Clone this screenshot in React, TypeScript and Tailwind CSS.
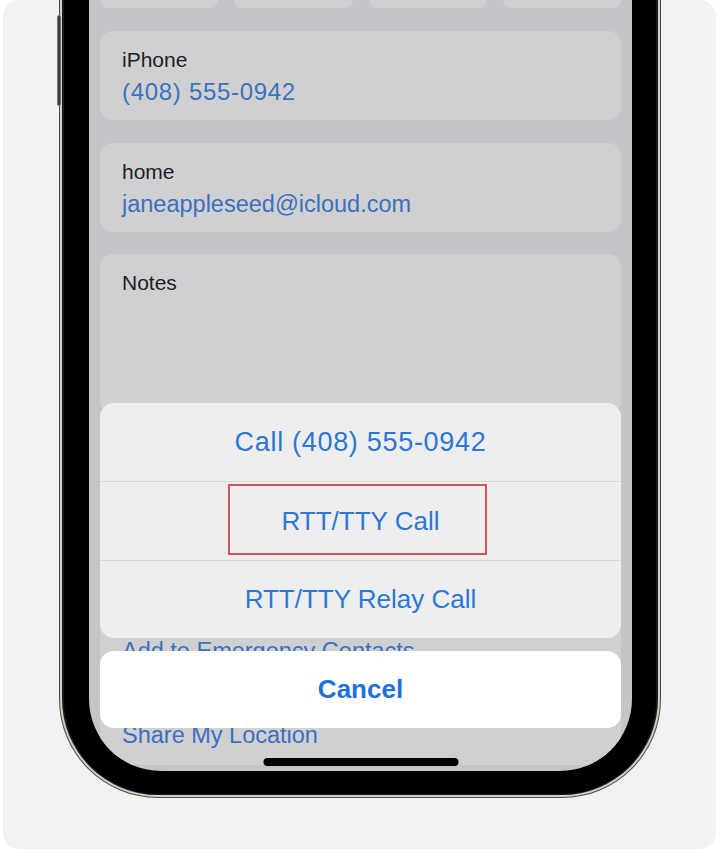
const font = { fontFamily: '"Liberation Sans", Arial, sans-serif' }

function FieldCard({ label, value, wide }: { label: string; value: string; wide?: boolean }) {
  return (
    <div className="h-[89px] rounded-[13px] bg-[#d0d0d3] pl-[22px] pt-[16px]">
      <p className="text-[21px] leading-[26px] text-[#1d1d1f]">{label}</p>
      <p className={wide ? "mt-[4px] text-[24px] leading-[30px] tracking-[0.7px] text-[#3a70bd]" : "mt-[4px] text-[23.5px] leading-[30px] text-[#3a70bd]"}>
        {value}
      </p>
    </div>
  )
}

function SheetRow({ children }: { children: React.ReactNode }) {
  return (
    <div className="relative flex h-[78px] items-center justify-center text-[26px] text-[#2b77d3]">
      {children}
    </div>
  )
}

function App() {
  return (
    <div className="h-[857px] w-[720px] overflow-hidden bg-white pl-[3px] pt-[4px]" style={font}>
      <div className="h-[849px] w-[713px] rounded-[16px] bg-[#f2f2f2] pl-[56px]">

        {/* phone body */}
        <div className="relative -mt-[4px] h-[798px] w-[602px]">
          {/* side button */}
          <div className="absolute -left-[2px] top-[15px] h-[91px] w-[4px] rounded-[2px] border border-[#777] bg-[#3c3a38]" />

          <div className="h-full rounded-b-[99px] bg-[#4d4b48] px-[1px] pb-[1px]">
            <div className="h-full rounded-b-[98px] bg-[#d3cec6] px-[2px] pb-[2px]">
              <div className="h-full rounded-b-[96px] bg-[#1c1b1a] px-[2px] pb-[1px]">
                <div className="h-full rounded-b-[94px] bg-black pb-[23px] pl-[25px] pr-[24px]">

                  {/* screen */}
                  <div className="relative h-full overflow-hidden rounded-b-[72px] bg-[#c5c5c9] px-[11px]">

                    <div className="flex gap-[16px]">
                      <div className="h-[8px] flex-1 rounded-b-[10px] bg-[#d0d0d3]" />
                      <div className="h-[8px] flex-1 rounded-b-[10px] bg-[#d0d0d3]" />
                      <div className="h-[8px] flex-1 rounded-b-[10px] bg-[#d0d0d3]" />
                      <div className="h-[8px] flex-1 rounded-b-[10px] bg-[#d0d0d3]" />
                    </div>

                    <div className="mt-[23px]">
                      <FieldCard label="iPhone" value="(408) 555-0942" wide />
                    </div>
                    <div className="mt-[23px]">
                      <FieldCard label="home" value="janeappleseed@icloud.com" />
                    </div>

                    <div className="mt-[22px] h-[160px] rounded-[13px] bg-[#d0d0d3] pl-[22px] pt-[16px]">
                      <p className="text-[21px] leading-[26px] text-[#1d1d1f]">Notes</p>
                    </div>

                    {/* contact actions, mostly under the sheet */}
                    <div className="mt-[22px] rounded-[13px] bg-[#d0d0d3] pl-[22px] pt-[185px] text-[23.5px] text-[#3a70bd]">
                      <p className="leading-[60px]">Add to Emergency Contacts</p>
                    </div>

                    <div className="mt-[24px] rounded-[13px] bg-[#d0d0d3] pl-[22px] text-[23.5px] text-[#3a70bd]">
                      <p className="leading-[60px]">Share My Location</p>
                    </div>

                    {/* action sheet */}
                    <div className="absolute inset-x-[11px] bottom-[43px] flex flex-col gap-[13px]">
                      <div className="overflow-hidden rounded-[14px] bg-[#eeeef0]">
                        <SheetRow>
                          <span className="text-[27px] tracking-[0.7px]">Call (408) 555-0942</span>
                        </SheetRow>
                        <div className="h-px bg-[#d6d6d9]" />
                        <SheetRow>
                          RTT/TTY Call
                          <div className="absolute left-[128px] top-[2px] h-[71px] w-[259px] border-2 border-[#d6505a]" />
                        </SheetRow>
                        <div className="h-px bg-[#d6d6d9]" />
                        <div className="flex h-[77px] items-center justify-center text-[26px] text-[#2b77d3]">
                          RTT/TTY Relay Call
                        </div>
                      </div>
                      <div className="flex h-[77px] items-center justify-center rounded-[14px] bg-white text-[26px] font-bold text-[#1f6fdc]">
                        Cancel
                      </div>
                    </div>

                    {/* home indicator */}
                    <div className="absolute bottom-[5px] left-1/2 h-[8px] w-[195px] -translate-x-1/2 rounded-full bg-black" />
                  </div>

                </div>
              </div>
            </div>
          </div>
        </div>

      </div>
    </div>
  )
}

export default App
